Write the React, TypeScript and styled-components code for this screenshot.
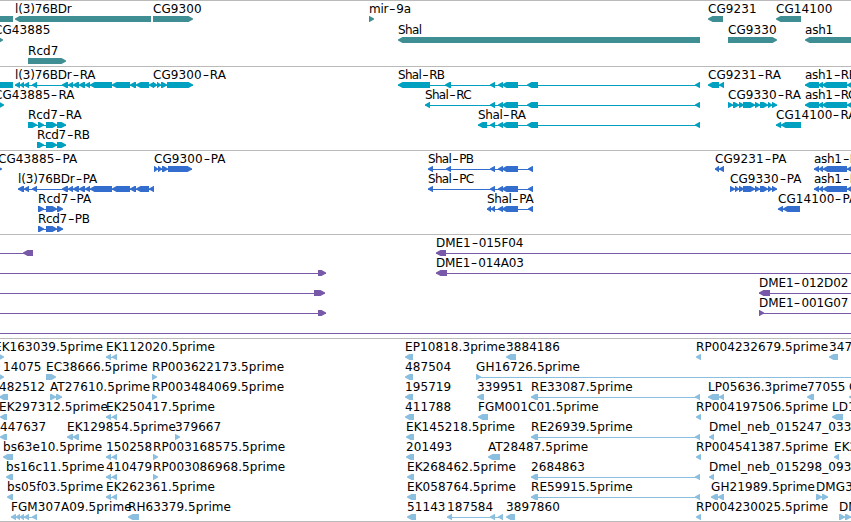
import React, {FC} from 'react';
import {styled, createGlobalStyle} from 'styled-components';

type Feature = {
  label?: string
  x?: number
  gap?: number
  parts: number[][]
  dir?: 'l' | 'r' | 'n'
  from?: number
  to?: number
}

type TrackData = {
  color: string
  height: number
  rowHeight: number
  rows: Feature[][]
}

const WIDTH = 851

const GlobalStyle = createGlobalStyle`
  body {
    margin: 0;
    background: #fff;
    overflow: hidden;
  }
`

const Browser = styled.div`
  width: ${WIDTH}px;
  height: 522px;
  display: flex;
  flex-direction: column;
  overflow: hidden;
  background: #fff;
  font-family: 'DejaVu Sans', sans-serif;
  font-size: 12px;
  color: #000;
`

const TrackBox = styled.div<{$height: number}>`
  box-sizing: border-box;
  height: ${p => p.$height}px;
  flex: none;
  border-top: 1px solid #bababa;
`

const Bottom = styled.div`
  height: 1px;
  flex: none;
  background: #bababa;
`

const Row = styled.div<{$height: number}>`
  position: relative;
  height: ${p => p.$height}px;
`

const Label = styled.span<{$x: number, $gap: number}>`
  position: absolute;
  left: ${p => p.$x}px;
  top: 0;
  line-height: 16px;
  letter-spacing: ${p => p.$gap}px;
  white-space: pre;
`

const Hyphen = styled.span`
  display: inline-block;
  width: 8px;
  text-align: center;
  transform: scaleX(1.5);
`

const Glyphs = styled.svg`
  position: absolute;
  left: 0;
  top: 15px;
  display: block;
`

const iRA = [[62, 68], [68, 73], [73, 79], [79, 85], [85, 90], [90, 112], [112, 130], [130, 136], [136, 149], [149, 154]]
const shal = [[498, 503], [502, 518]]
const pair = [[106, 111], [112, 117]]
const longRead = [[531, 538], [695, 700]]
const cg9330 = [[739, 744], [743, 755], [755, 760], [760, 768], [768, 772], [772, 777]]
const ash1R = [[805, 819], [818, 823], [822, 847], [847, 860]]
const ash1P = [[814, 819], [819, 823], [823, 847], [847, 860]]

const tracks: TrackData[] = [
  {
    color: '#3f8e93',
    height: 66,
    rowHeight: 21,
    rows: [
      [
        {parts: [[0, 13]], dir: 'n'},
        {label: 'l(3)76BDr', gap: -0.15, parts: [[15, 151]]},
        {label: 'CG9300', parts: [[153, 193]], dir: 'r'},
        {label: 'mir-9a', gap: -0.2, parts: [[369, 374]], dir: 'r'},
        {label: 'CG9231', parts: [[708, 723]]},
        {label: 'CG14100', parts: [[776, 801]]},
      ],
      [
        {label: 'CG43885', x: -6, parts: [[-2, 3]], dir: 'r'},
        {label: 'Shal', gap: -0.6, parts: [[398, 700]]},
        {label: 'CG9330', parts: [[728, 777]], dir: 'r'},
        {label: 'ash1', gap: -0.2, parts: [[805, 860]]},
      ],
      [{label: 'Rcd7', parts: [[28, 66]], dir: 'r'}],
    ],
  },
  {
    color: '#00a0c1',
    height: 84,
    rowHeight: 20,
    rows: [
      [
        {parts: [[0, 13]], dir: 'n'},
        {label: 'l(3)76BDr-RA', gap: -0.15, parts: [[15, 20], [20, 24], [24, 29], [32, 37], ...iRA]},
        {label: 'CG9300-RA', parts: [[153, 157], [157, 161], [161, 167], [167, 193]], dir: 'r'},
        {label: 'Shal-RB', gap: -0.7, parts: [[398, 430], [445, 451], [490, 495], ...shal, [527, 538], [695, 700]]},
        {label: 'CG9231-RA', parts: [[708, 719], [719, 724]]},
        {label: 'ash1-RB', gap: -0.3, parts: ash1R},
      ],
      [
        {label: 'CG43885-RA', x: -6, parts: [[-1, 4]], dir: 'r'},
        {label: 'Shal-RC', gap: -0.7, parts: [[425, 430], [490, 495], ...shal, [527, 538], [695, 700]]},
        {label: 'CG9330-RA', parts: [[728, 733], [733, 739], ...cg9330], dir: 'r'},
        {label: 'ash1-RC', gap: -0.3, parts: ash1R},
      ],
      [
        {label: 'Rcd7-RA', gap: -0.1, parts: [[28, 37], [38, 44], [46, 57], [57, 66]], dir: 'r'},
        {label: 'Shal-RA', gap: -0.4, parts: [[478, 487], [490, 495], ...shal, [527, 538], [695, 700]]},
        {label: 'CG14100-RA', parts: [[776, 781], [781, 801]]},
      ],
      [{label: 'Rcd7-RB', gap: -0.35, parts: [[37, 44], [46, 57], [57, 66]], dir: 'r'}],
    ],
  },
  {
    color: '#336dcd',
    height: 84,
    rowHeight: 20,
    rows: [
      [
        {label: 'CG43885-PA', x: -2, parts: [[-3, 2]], dir: 'r'},
        {label: 'CG9300-PA', parts: [[154, 158], [158, 162], [162, 168], [168, 192]], dir: 'r'},
        {label: 'Shal-PB', gap: -0.7, parts: [[428, 433], [446, 451], [490, 495], ...shal, [528, 533]]},
        {label: 'CG9231-PA', parts: [[715, 719], [719, 724]]},
        {label: 'ash1-PB', gap: -0.3, parts: ash1P},
      ],
      [
        {label: 'l(3)76BDr-PA', gap: -0.15, parts: [[18, 24], [24, 29], [32, 37], ...iRA]},
        {label: 'Shal-PC', gap: -0.7, parts: [[428, 433], [490, 495], ...shal, [528, 533]]},
        {label: 'CG9330-PA', parts: [[730, 735], [735, 739], ...cg9330], dir: 'r'},
        {label: 'ash1-PC', gap: -0.3, parts: ash1P},
      ],
      [
        {label: 'Rcd7-PA', parts: [[38, 44], [46, 57], [57, 63]], dir: 'r'},
        {label: 'Shal-PA', gap: -0.4, parts: [[487, 491], [491, 495], ...shal, [528, 533]]},
        {label: 'CG14100-PA', parts: [[778, 783], [783, 800]]},
      ],
      [{label: 'Rcd7-PB', gap: -0.35, parts: [[38, 44], [46, 57], [57, 63]], dir: 'r'}],
    ],
  },
  {
    color: '#7858a8',
    height: 104,
    rowHeight: 20,
    rows: [
      [
        {parts: [[23, 33]], from: 0},
        {label: 'DME1-015F04', gap: -0.05, parts: [[436, 446]], to: WIDTH},
      ],
      [
        {parts: [[318, 326]], from: 0, dir: 'r'},
        {label: 'DME1-014A03', gap: -0.15, parts: [[436, 447]], to: WIDTH},
      ],
      [
        {parts: [[314, 325]], from: 0, dir: 'r'},
        {label: 'DME1-012D02', gap: -0.1, parts: [[759, 770]], to: WIDTH},
      ],
      [
        {parts: [[318, 326]], from: 0, dir: 'r'},
        {label: 'DME1-001G07', gap: -0.1, parts: [[759, 764]], to: WIDTH, dir: 'r'},
      ],
      [{parts: [], from: 0, to: WIDTH}],
    ],
  },
  {
    color: '#8abfdf',
    height: 183,
    rowHeight: 20,
    rows: [
      [
        {label: 'EK163039.5prime', x: -6, parts: [[-1, 4]], dir: 'r'},
        {label: 'EK112020.5prime', parts: pair},
        {label: 'EP10818.3prime', parts: [[405, 413]]},
        {label: '3884186', parts: [[506, 516]]},
        {label: 'RP004232679.5prime', parts: [[696, 701]]},
        {label: '347', parts: [[829, 838]]},
      ],
      [
        {label: '14075', x: 3, parts: [[-1, 4]], dir: 'r'},
        {label: 'EC38666.5prime', parts: [[46, 56]], dir: 'r'},
        {label: 'RP003622173.5prime', parts: [[152, 157]], dir: 'r'},
        {label: '487504', parts: [[405, 413]]},
        {label: 'GH16726.5prime', parts: [[476, 481]], dir: 'r', to: WIDTH},
      ],
      [
        {label: '482512', x: -1, parts: [[-1, 8]]},
        {label: 'AT27610.5prime', parts: [[50, 56], [56, 62]], dir: 'r'},
        {label: 'RP003484069.5prime', parts: [[152, 157]], dir: 'r'},
        {label: '195719', parts: [[405, 413]]},
        {label: '339951', parts: [[477, 484]]},
        {label: 'RE33087.5prime', parts: longRead},
        {label: 'LP05636.3prime', parts: [[708, 719], [719, 724]]},
        {label: '77055', parts: [[807, 814]]},
        {label: 'C', parts: [[849, 856]]},
      ],
      [
        {label: 'EK297312.5prime', x: -1, parts: [[0, 7]]},
        {label: 'EK250417.5prime', parts: pair},
        {label: '411788', parts: [[405, 414]]},
        {label: 'FGM001C01.5prime', parts: [[478, 488]]},
        {label: 'RP004197506.5prime', parts: [[696, 701]]},
        {label: 'LD1', parts: [[832, 843]]},
      ],
      [
        {label: '447637', x: 0, parts: [[0, 7]]},
        {label: 'EK129854.5prime', parts: [[67, 73], [73, 79]]},
        {label: '379667', parts: [[175, 180]], dir: 'r'},
        {label: 'EK145218.5prime', parts: [[406, 414]]},
        {label: 'RE26939.5prime', parts: longRead},
        {label: 'Dmel_neb_015247_033', parts: [[709, 714]]},
      ],
      [
        {label: 'bs63e10.5prime', parts: [[3, 13]]},
        {label: '150258', parts: pair},
        {label: 'RP003168575.5prime', parts: [[153, 158]], dir: 'r'},
        {label: '201493', parts: [[406, 414]]},
        {label: 'AT28487.5prime', parts: [[488, 500]]},
        {label: 'RP004541387.5prime', parts: [[696, 701]]},
        {label: 'EK2', parts: [[834, 839]]},
      ],
      [
        {label: 'bs16c11.5prime', parts: [[6, 13]]},
        {label: '410479', parts: pair},
        {label: 'RP003086968.5prime', parts: [[153, 158]], dir: 'r'},
        {label: 'EK268462.5prime', parts: [[407, 414]]},
        {label: '2684863', parts: longRead},
        {label: 'Dmel_neb_015298_093', parts: [[709, 714]]},
      ],
      [
        {label: 'bs05f03.5prime', parts: [[7, 13]]},
        {label: 'EK262361.5prime', parts: pair},
        {label: 'EK058764.5prime', parts: [[407, 416]]},
        {label: 'RE59915.5prime', parts: longRead},
        {label: 'GH21989.5prime', parts: [[711, 718], [718, 724]]},
        {label: 'DMG3', parts: [[816, 822], [822, 828]], dir: 'r'},
      ],
      [
        {label: 'FGM307A09.5prime', parts: [[11, 16], [16, 20], [20, 24], [24, 29], [32, 37]]},
        {label: 'RH63379.5prime', parts: [[128, 139]]},
        {label: '51143', parts: [[407, 416]]},
        {label: '187584', parts: [[447, 452], [490, 495], [498, 503]]},
        {label: '3897860', parts: [[506, 515]]},
        {label: 'RP004230025.5prime', parts: [[696, 701]]},
        {label: 'DM', parts: [[839, 845], [845, 851]], dir: 'r'},
      ],
    ],
  },
]

// block with a pointed end on the side the strand runs to
const arrow = ([a, b]: number[], dir: string) => {
  const head = Math.min(5, b - a)
  if (dir === 'n') return `M${a} 0H${b}V6H${a}Z`
  if (dir === 'r') return `M${a} 0H${b - head + 0.5}L${b} 2.5V3.5L${b - head + 0.5} 6H${a}Z`
  return `M${b} 0H${a + head - 0.5}L${a} 2.5V3.5L${a + head - 0.5} 6H${b}Z`
}

const Shape: FC<{feature: Feature}> = ({feature}) => {
  const {parts, dir = 'l'} = feature
  const from = feature.from ?? parts[0][0]
  const to = feature.to ?? parts[parts.length - 1][1]
  return (
    <g>
      {(parts.length !== 1 || feature.from !== undefined || feature.to !== undefined) &&
        <rect x={from} y={3} width={to - from} height={1}/>}
      {parts.map((p, i) => <path key={i} d={arrow(p, dir)}/>)}
    </g>
  )
}

const Name: FC<{text: string}> = ({text}) => {
  const [head, tail] = text.split('-')
  return tail ? <>{head}<Hyphen>-</Hyphen>{tail}</> : <>{head}</>
}

const Track: FC<{track: TrackData}> = ({track}) => (
  <TrackBox $height={track.height}>
    {track.rows.map((row, i) => (
      <Row key={i} $height={track.rowHeight}>
        <Glyphs width={WIDTH} height={6} fill={track.color}>
          {row.map((f, j) => <Shape key={j} feature={f}/>)}
        </Glyphs>
        {row.map((f, j) => f.label &&
          <Label key={j} $x={f.x ?? f.parts[0][0]} $gap={f.gap ?? 0.08}><Name text={f.label}/></Label>)}
      </Row>
    ))}
  </TrackBox>
)

const App: FC = () => (
  <>
    <GlobalStyle/>
    <Browser>
      {tracks.map((t, i) => <Track key={i} track={t}/>)}
      <Bottom/>
    </Browser>
  </>
)

export default App
